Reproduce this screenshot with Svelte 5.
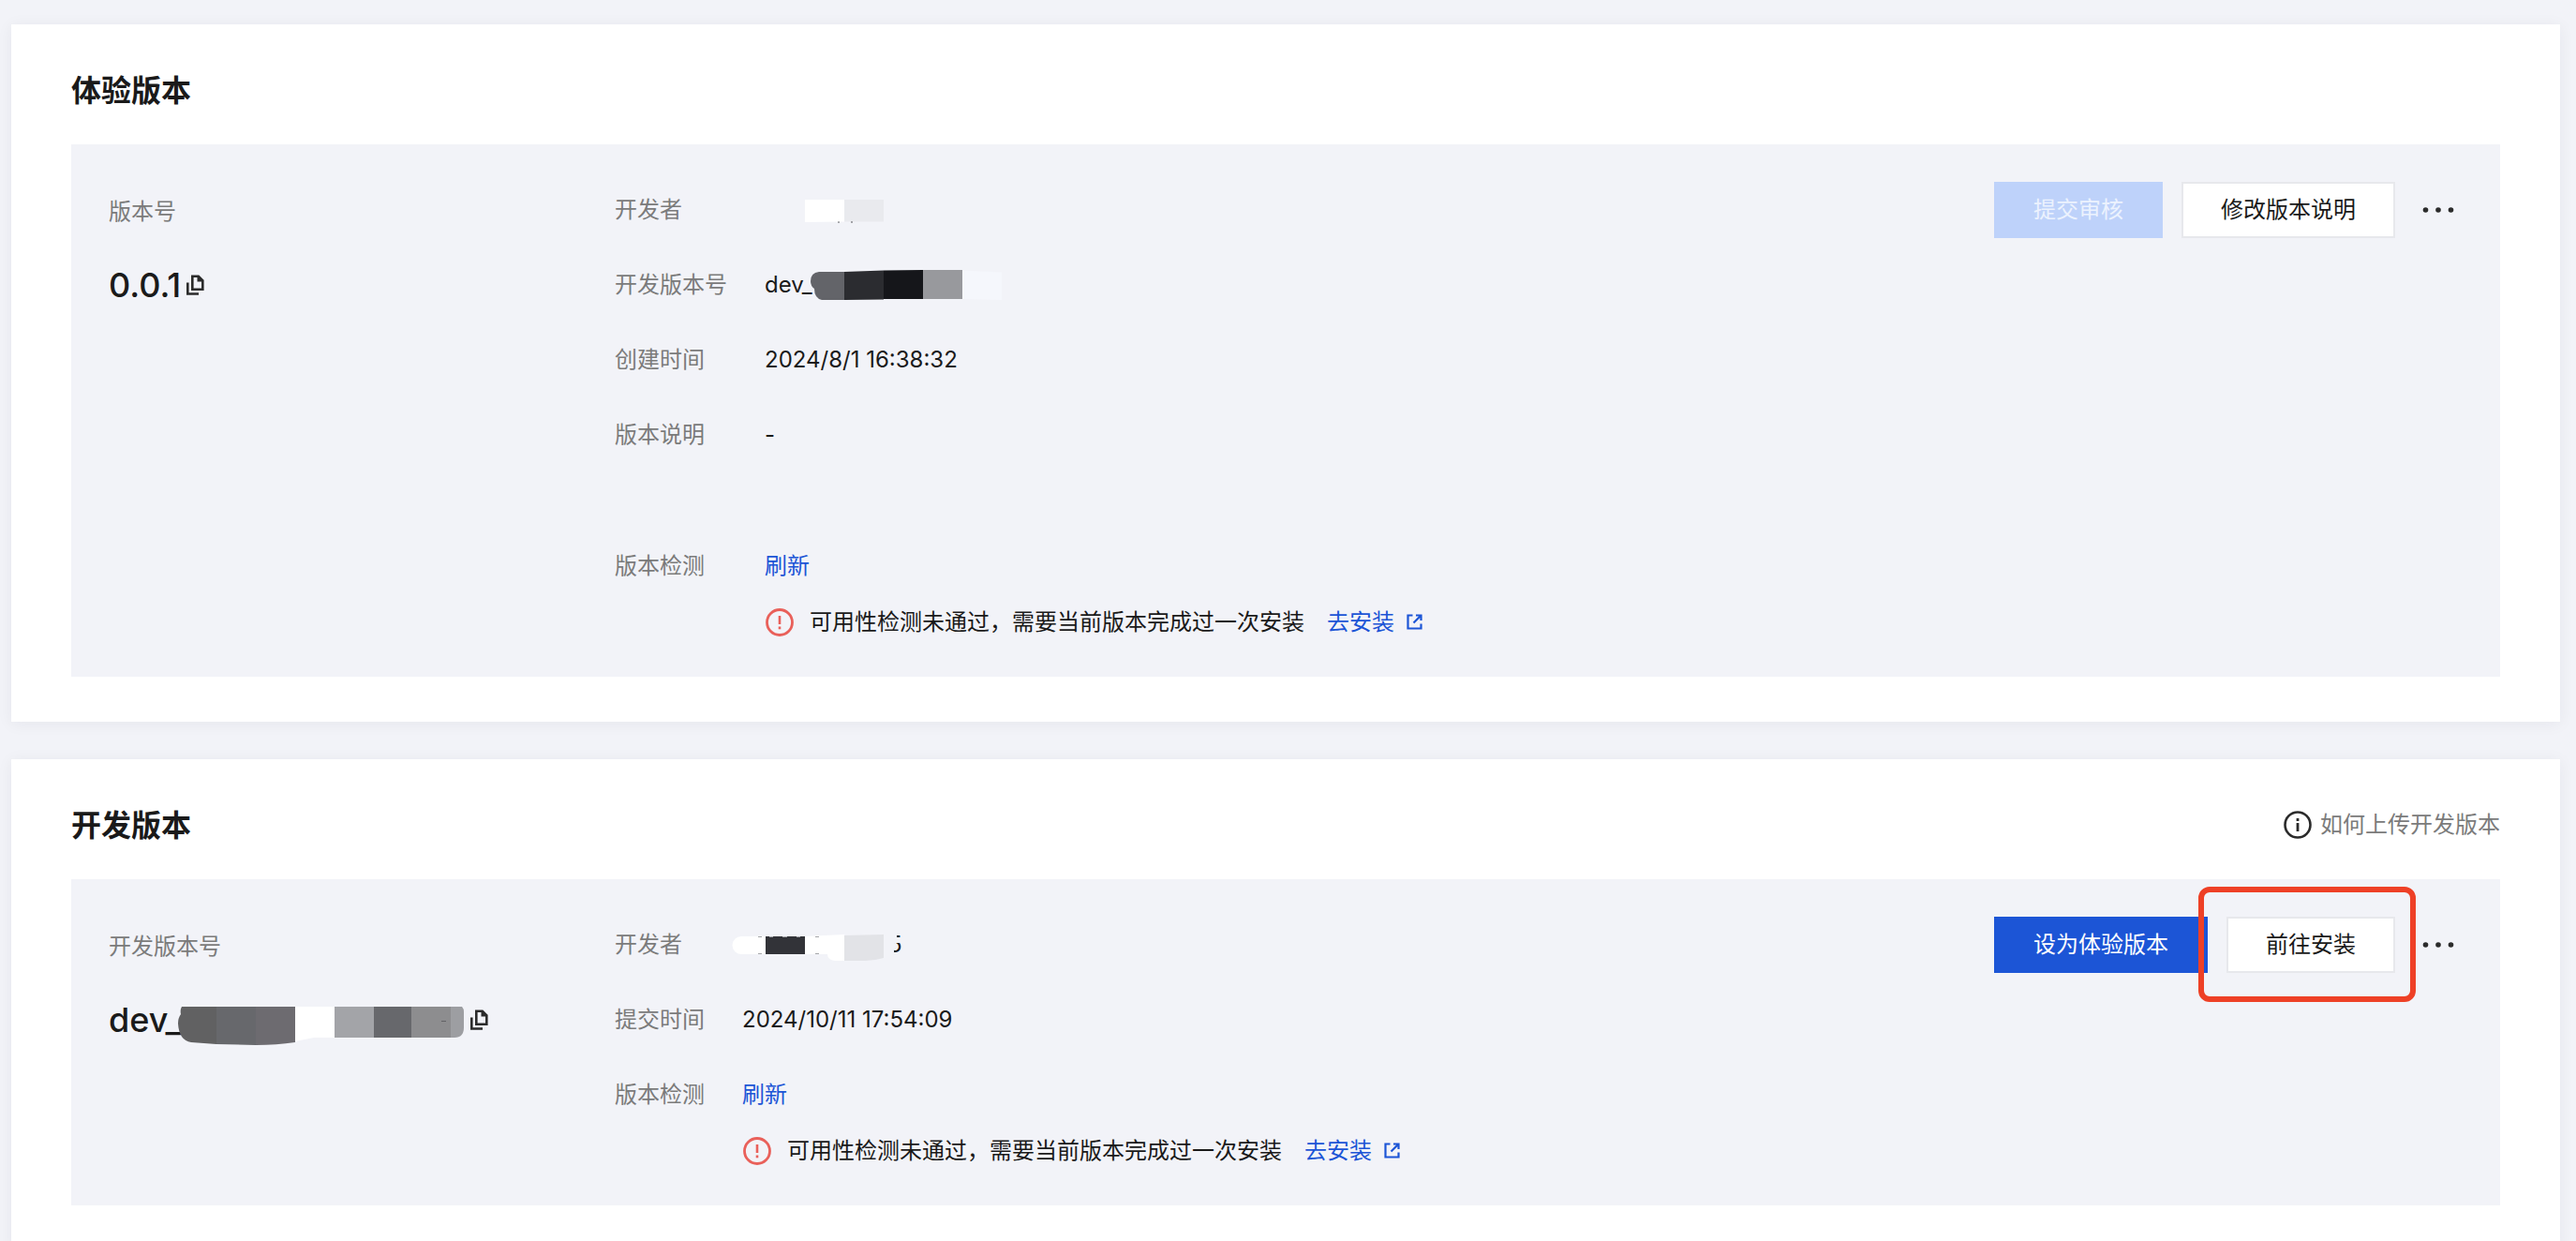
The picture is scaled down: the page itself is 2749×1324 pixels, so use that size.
<script>
  const trial = {
    title: "体验版本",
    label: "版本号",
    version: "0.0.1",
  };

  const dev = {
    title: "开发版本",
    label: "开发版本号",
    version: "dev_",
  };

  let copied = $state("");

  function copy(text) {
    navigator.clipboard?.writeText(text);
    copied = text;
  }
</script>

{#snippet copyButton(text)}
  <button
    class="icon-btn"
    class:copied={copied === text}
    aria-label="复制"
    onclick={() => copy(text)}
  >
    <svg width="24" height="24" viewBox="0 0 24 24" fill="none" stroke="#2b2b2b">
      <path d="M3.300 9.500v12H15" stroke-width="2.600" />
      <path d="M8.300 2.800h6.500l4.500 4.500v9.400h-11z" stroke-width="2.600" />
      <path d="M13.500 2v6.500H20z" fill="#2b2b2b" stroke="none" />
    </svg>
  </button>
{/snippet}

{#snippet moreButton()}
  <button class="more-btn" aria-label="更多">
    <svg width="52" height="12" viewBox="0 0 52 12" fill="#2b2b2b">
      <circle cx="12.500" cy="6" r="2.800" />
      <circle cx="26" cy="6" r="2.800" />
      <circle cx="39.500" cy="6" r="2.800" />
    </svg>
  </button>
{/snippet}

{#snippet check()}
  <button class="link">刷新</button>
  <div class="alert">
    <svg width="32" height="32" viewBox="0 0 32 32" fill="none" stroke="#e9605a">
      <circle cx="16" cy="16" r="13.500" stroke-width="2.800" />
      <path d="M16 9v9" stroke-width="2.600" />
      <path d="M16 20.500v2.800" stroke-width="2.600" />
    </svg>
    <span class="alert-text">可用性检测未通过，需要当前版本完成过一次安装</span>
    <a class="link" href="#install">
      去安装
      <svg width="20" height="20" viewBox="0 0 20 20" fill="none" stroke="#1c55d6">
        <path d="M7.500 2.500H2.500v14h14V11.500" stroke-width="2.200" />
        <path d="M11 2.500h5.500V8M16.500 2.500L8.500 10.500" stroke-width="2.200" />
      </svg>
    </a>
  </div>
{/snippet}

<main class="page">
  <section class="card">
    <header class="card-header">
      <h2>{trial.title}</h2>
    </header>
    <div class="panel">
      <div class="version">
        <div class="label">{trial.label}</div>
        <div class="number">
          <span>{trial.version}</span>
          {@render copyButton(trial.version)}
        </div>
      </div>

      <dl class="details wide">
        <dt>开发者</dt>
        <dd>
          <svg class="mask" width="260" height="40" viewBox="0 0 260 40">
            <path d="M79 30v3.500M93 30v3.500" stroke="#55565a" stroke-width="2" />
            <path d="M43 9h42v23.500L43 33z" fill="#fff" />
            <path d="M85 9h42v23.500H85z" fill="#e9eaee" />
          </svg>
        </dd>
        <dt>开发版本号</dt>
        <dd>
          dev_
          <svg class="mask" width="260" height="40" viewBox="0 0 260 40">
            <path d="M85 6H58q-9 1-9 10 0 5 4 8 0 10 8 12h24z" fill="#636469" />
            <path d="M85 6l42-1.500v31L85 36z" fill="#2b2c30" />
            <path d="M127 4.500L169 4v31h-42z" fill="#15161a" />
            <path d="M169 4h42v31h-42z" fill="#98999d" />
            <path d="M211 4.500l42 2V36l-42-1z" fill="#f5f7fc" />
          </svg>
        </dd>
        <dt>创建时间</dt>
        <dd>2024/8/1 16:38:32</dd>
        <dt class="note">版本说明</dt>
        <dd class="note">-</dd>
        <dt>版本检测</dt>
        <dd>{@render check()}</dd>
      </dl>

      <div class="actions">
        <button class="btn primary" disabled>提交审核</button>
        <button class="btn">修改版本说明</button>
        {@render moreButton()}
      </div>
    </div>
  </section>

  <section class="card">
    <header class="card-header">
      <h2>{dev.title}</h2>
      <a class="help" href="#help">
        <svg width="32" height="32" viewBox="0 0 32 32" fill="none" stroke="#2b2b2b">
          <circle cx="16" cy="16" r="13.500" stroke-width="2.600" />
          <path d="M16 14v9" stroke-width="2.800" />
          <path d="M16 9v3" stroke-width="2.800" />
        </svg>
        如何上传开发版本
      </a>
    </header>
    <div class="panel">
      <div class="version">
        <div class="label">{dev.label}</div>
        <div class="number masked">
          <span>{dev.version}</span>
          {@render copyButton(dev.version)}
          <svg class="mask" width="390" height="48" viewBox="0 0 390 48">
            <path d="M115 10H78q-2 3-1 8-3 4-3 10 1 18 14 20l27 2z" fill="#616162" />
            <path d="M115 10h42v41l-42-1z" fill="#67686c" />
            <path d="M157 10h42v38q-20 3-42 3z" fill="#6d6b70" />
            <path d="M199 10h42v33h-22l-20 4z" fill="#fff" />
            <path d="M241 10h42v33h-42z" fill="#a3a4a8" />
            <path d="M283 10h40v33h-40z" fill="#67686c" />
            <path d="M323 10h42v33h-42z" fill="#8d8d8f" />
            <path d="M355 25.500h5" stroke="#626266" stroke-width="1" />
            <path d="M365 10h12q2 2 2 6v16q0 11-10 11h-4z" fill="#9d9ea2" />
          </svg>
        </div>
      </div>

      <dl class="details">
        <dt>开发者</dt>
        <dd>
          <span class="tail">5</span>
          <svg class="mask shifted" width="200" height="40" viewBox="0 0 200 40">
            <path d="M162 6h14v8h3v4h-6v14h-11z" fill="#f2f3f8" />
            <path d="M46 11H10a9 9 0 0 0 0 19h36z" fill="#fff" />
            <path d="M36 11h42v19H36z" fill="#323338" />
            <path d="M78 11l42-2v28h-10q-8-1-8-7H78z" fill="#fff" />
            <path d="M120 10l42-1v25q-10 3-20 3h-22z" fill="#e2e3e7" />
            <path
              d="M28 11.500h4M40 11.500h4M54 11.500h5M69 11.500h4M89 11.500h4M28 29.500h4M89 29.500h4"
              stroke="#a6a7aa"
              stroke-width="1"
            />
          </svg>
        </dd>
        <dt>提交时间</dt>
        <dd>2024/10/11 17:54:09</dd>
        <dt>版本检测</dt>
        <dd>{@render check()}</dd>
      </dl>

      <div class="actions">
        <button class="btn primary">设为体验版本</button>
        <button class="btn marked">前往安装</button>
        {@render moreButton()}
      </div>
    </div>
  </section>
</main>

<style>
  :global(body) {
    background: #f2f3f8;
  }

  .page {
    box-sizing: border-box;
    height: 100vh;
    overflow: hidden;
    padding: 26px 17px 0 12px;
    font-family: Inter, "Noto Sans CJK SC", sans-serif;
    font-size: 24px;
    line-height: 40px;
    color: #1a1a1a;
  }

  .card {
    padding: 48px 64px;
    margin-bottom: 40px;
    background: #fff;
    box-shadow: 0 2px 16px rgba(30, 35, 50, 0.06);
  }

  .card-header {
    display: flex;
    align-items: center;
    justify-content: space-between;
    margin-bottom: 36px;
  }

  h2 {
    margin: 0;
    padding-top: 2px;
    font-size: 32px;
    line-height: 42px;
    font-weight: 600;
  }

  .help {
    display: flex;
    align-items: center;
    gap: 8px;
    color: #7b7b7b;
    text-decoration: none;
  }

  .panel {
    display: grid;
    grid-template-columns: 500px 1fr auto;
    column-gap: 40px;
    align-items: start;
    padding: 40px 40px 38px;
    background: #f2f3f8;
  }

  .version {
    padding-top: 12px;
  }

  .label,
  dt {
    color: #7b7b7b;
  }

  .number {
    position: relative;
    display: flex;
    align-items: center;
    margin-top: 34px;
    font-size: 36px;
    line-height: 48px;
    font-weight: 500;
  }

  .masked {
    width: 408px;
    justify-content: space-between;
  }

  .icon-btn {
    display: flex;
    margin-left: 4px;
    padding: 0;
    border: none;
    background: none;
    cursor: pointer;
  }

  .icon-btn.copied {
    opacity: 0.6;
  }

  .details {
    display: grid;
    grid-template-columns: 96px 1fr;
    gap: 40px;
    margin: 0;
    padding-top: 10px;
  }

  .details.wide {
    grid-template-columns: 120px 1fr;
  }

  dt {
    white-space: nowrap;
  }

  dd {
    position: relative;
    margin: 0;
  }

  .note {
    margin-bottom: 60px;
  }

  /* Covers part of the value under it */
  .mask {
    position: absolute;
    top: 0;
    left: 0;
    overflow: visible;
    pointer-events: none;
  }

  .shifted {
    left: -11px;
  }

  .tail {
    margin-left: 156px;
  }

  .link {
    display: inline-flex;
    align-items: center;
    gap: 12px;
    padding: 0;
    border: none;
    background: none;
    font: inherit;
    color: #1c55d6;
    text-decoration: none;
    cursor: pointer;
  }

  dd > .link {
    display: flex;
  }

  .alert {
    display: flex;
    align-items: center;
    margin-top: 20px;
  }

  .alert-text {
    margin: 0 24px 0 16px;
  }

  .actions {
    display: flex;
    align-items: center;
  }

  .btn {
    position: relative;
    height: 60px;
    margin-right: 20px;
    padding: 0 40px;
    border: 2px solid #e7e8ec;
    background: #fff;
    font: inherit;
    color: #1a1a1a;
    cursor: pointer;
  }

  .btn.primary {
    border-color: #1c55d6;
    background: #1c55d6;
    color: #fff;
  }

  .btn.primary:disabled {
    border-color: #bed2fa;
    background: #bed2fa;
    color: #ecf2fe;
    cursor: not-allowed;
  }

  .marked::after {
    content: "";
    position: absolute;
    inset: -34px -24px -33px -32px;
    border: 6px solid #ee4026;
    border-radius: 12px;
  }

  .more-btn {
    display: flex;
    align-items: center;
    height: 60px;
    padding: 0;
    border: none;
    background: none;
    cursor: pointer;
  }
</style>
